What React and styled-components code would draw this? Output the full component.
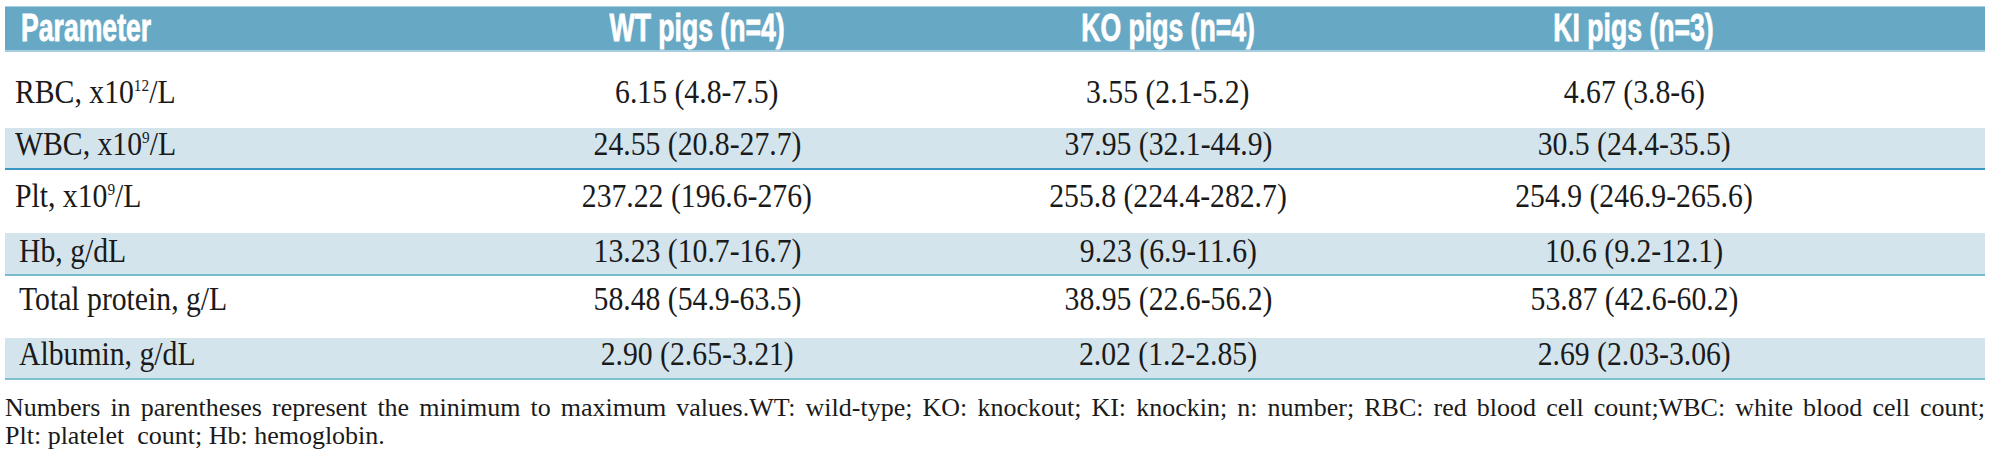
import React from 'react';
import styled, { createGlobalStyle } from 'styled-components';

const GlobalStyle = createGlobalStyle`
  html, body {
    margin: 0;
    padding: 0;
    background: #ffffff;
    overflow: hidden;
  }
`;

const Page = styled.div`
  width: 2000px;
  box-sizing: border-box;
  padding: 6px 15px 0 5px;
  font-family: 'Liberation Serif', 'Times New Roman', serif;
  color: #1a1a1a;
`;

const Table = styled.div`
  display: flex;
  flex-direction: column;
`;

const HeaderRow = styled.div`
  display: grid;
  grid-template-columns: 460px 464px 478px 454px 1fr;
  align-items: center;
  height: 46px;
  box-sizing: border-box;
  padding-bottom: 2px;
  background: #67a8c4;
  border-top: 1px solid #a8cfe0;
  border-bottom: 2px solid #a8cfe0;
  color: #ffffff;
  font-family: 'Liberation Sans', Arial, sans-serif;
  font-weight: 700;
  font-size: 38px;
  line-height: 38px;
  -webkit-text-stroke: 0.8px #ffffff;
`;

const HeadCell = styled.div`
  text-align: ${(p) => (p.$left ? 'left' : 'center')};
  padding-left: ${(p) => (p.$left ? '16px' : '0')};
  white-space: nowrap;
`;

// condensed look of the printed table faces
const Narrow = styled.span`
  display: inline-block;
  transform: scaleX(${(p) => p.$x});
  transform-origin: ${(p) => (p.$left ? 'left center' : 'center')};
`;

const Row = styled.div`
  display: grid;
  grid-template-columns: 460px 464px 478px 454px 1fr;
  align-items: start;
  height: ${(p) => p.$h}px;
  box-sizing: border-box;
  padding-top: ${(p) => p.$pt}px;
  background: ${(p) => (p.$shade ? '#d3e4ed' : '#ffffff')};
  border-bottom: ${(p) => (p.$rule ? `2px solid ${p.$rule}` : 'none')};
  font-size: 33px;
  line-height: 30px;
`;

const ParamCell = styled.div`
  padding-left: ${(p) => (p.$indent ? '14px' : '10px')};
  white-space: nowrap;
`;

const ValueCell = styled.div`
  text-align: center;
  white-space: nowrap;
`;

const Sup = styled.sup`
  font-size: 17px;
  line-height: 0;
  vertical-align: 12px;
`;

const Footnote = styled.div`
  margin-top: 14px;
  font-size: 26px;
  line-height: 28px;
`;

const JustLine = styled.div`
  text-align: justify;
  text-align-last: justify;
`;

const rows = [
  { label: <>RBC, x10<Sup>12</Sup>/L</>, values: ['6.15 (4.8-7.5)', '3.55 (2.1-5.2)', '4.67 (3.8-6)'], h: 76, pt: 25 },
  { label: <>WBC, x10<Sup>9</Sup>/L</>, values: ['24.55 (20.8-27.7)', '37.95 (32.1-44.9)', '30.5 (24.4-35.5)'], h: 42, pt: 1, shade: true, rule: '#3a96c3' },
  { label: <>Plt, x10<Sup>9</Sup>/L</>, values: ['237.22 (196.6-276)', '255.8 (224.4-282.7)', '254.9 (246.9-265.6)'], h: 63, pt: 11 },
  { label: 'Hb, g/dL', indent: true, values: ['13.23 (10.7-16.7)', '9.23 (6.9-11.6)', '10.6 (9.2-12.1)'], h: 43, pt: 3, shade: true, rule: '#79bacd' },
  { label: 'Total protein, g/L', indent: true, values: ['58.48 (54.9-63.5)', '38.95 (22.6-56.2)', '53.87 (42.6-60.2)'], h: 62, pt: 8 },
  { label: 'Albumin, g/dL', indent: true, values: ['2.90 (2.65-3.21)', '2.02 (1.2-2.85)', '2.69 (2.03-3.06)'], h: 42, pt: 1, shade: true, rule: '#7dbfcf' },
];

const App = () => {
  return (
    <Page>
      <GlobalStyle />
      <Table>
        <HeaderRow>
          <HeadCell $left><Narrow $x={0.7} $left>Parameter</Narrow></HeadCell>
          <HeadCell><Narrow $x={0.7}>WT pigs (n=4)</Narrow></HeadCell>
          <HeadCell><Narrow $x={0.7}>KO pigs (n=4)</Narrow></HeadCell>
          <HeadCell><Narrow $x={0.7}>KI pigs (n=3)</Narrow></HeadCell>
          <div />
        </HeaderRow>
        {rows.map((r, i) => (
          <Row key={i} $h={r.h} $pt={r.pt} $shade={r.shade} $rule={r.rule}>
            <ParamCell $indent={r.indent}>
              <Narrow $x={0.9} $left>{r.label}</Narrow>
            </ParamCell>
            {r.values.map((v) => (
              <ValueCell key={v}>
                <Narrow $x={0.9}>{v}</Narrow>
              </ValueCell>
            ))}
            <div />
          </Row>
        ))}
      </Table>
      <Footnote>
        <JustLine>
          Numbers in parentheses represent the minimum to maximum values.WT: wild-type; KO: knockout; KI: knockin; n: number; RBC: red blood cell count;WBC: white blood cell count;
        </JustLine>
        <div>Plt: platelet&nbsp; count; Hb: hemoglobin.</div>
      </Footnote>
    </Page>
  );
};

export default App;
